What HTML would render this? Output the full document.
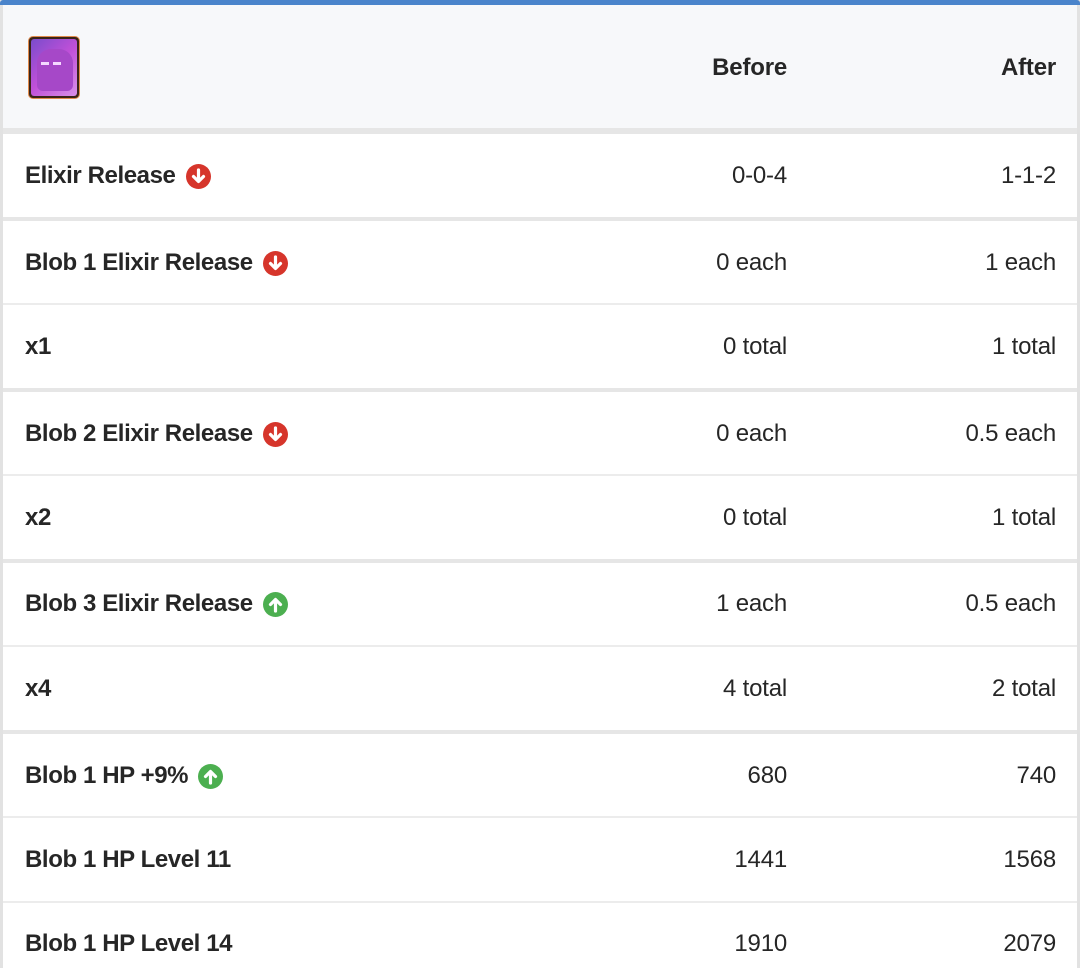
<!DOCTYPE html>
<html><head><meta charset="utf-8"><style>
html,body{margin:0;padding:0;width:1080px;height:968px;overflow:hidden;background:#fff;font-family:"Liberation Sans",sans-serif;color:#262626}
.a{position:absolute}
.t{position:absolute;left:25px;font-size:24px;font-weight:bold;line-height:30px;display:flex;align-items:center;white-space:nowrap;letter-spacing:-0.4px}
.v{position:absolute;font-size:24px;line-height:30px;text-align:right;white-space:nowrap;letter-spacing:-0.2px}
.b{right:293px}.c{right:24px}
.thick{position:absolute;left:3px;width:1074px;height:4px;background:#e6e6e6}
.thin{position:absolute;left:3px;width:1074px;height:2px;background:#ececec}
svg{margin-left:10px}
</style></head><body>
<div class="a" style="left:0;top:0;width:1080px;height:968px;border-left:3px solid #e2e2e2;border-right:3px solid #e2e2e2;box-sizing:border-box"></div>
<div class="a" style="left:0;top:0;width:1080px;height:5px;background:#4a84cb;border-radius:3px 3px 0 0"></div>
<div class="a" style="left:3px;top:5px;width:1074px;height:123px;background:#f7f8fa"></div>
<div class="a" style="left:28px;top:36px;width:52px;height:63px;border-radius:5px;background:#3a2418;border:1px solid #e08a4a;box-sizing:border-box;overflow:hidden">
<div style="position:absolute;left:2px;top:2px;right:2px;bottom:2px;border-radius:3px;background:linear-gradient(135deg,#7a4ccc,#c050d8 50%,#d890e8)"></div>
<div style="position:absolute;left:8px;top:12px;width:36px;height:42px;border-radius:14px 14px 6px 6px;background:#a648c8"></div>
<div style="position:absolute;left:12px;top:25px;width:8px;height:3px;background:#f4d8ff"></div>
<div style="position:absolute;left:24px;top:25px;width:8px;height:3px;background:#f4d8ff"></div>
</div>
<div class="v b" style="top:53px;font-weight:bold">Before</div>
<div class="v c" style="top:53px;font-weight:bold">After</div>
<div class="thick" style="top:128px;height:6px"></div>
<div class="thick" style="top:217px"></div>
<div class="thin" style="top:303px"></div>
<div class="thick" style="top:388px"></div>
<div class="thin" style="top:474px"></div>
<div class="thick" style="top:559px"></div>
<div class="thin" style="top:645px"></div>
<div class="thick" style="top:730px"></div>
<div class="thin" style="top:816px"></div>
<div class="thin" style="top:901px"></div>

<svg width="0" height="0" style="position:absolute"><defs>
<g id="dn"><circle cx="12.5" cy="12.5" r="12.5" fill="#d6352b"/><path d="M12.5 6v11M7.5 12.5l5 5 5-5" stroke="#fff" stroke-width="3.2" fill="none" stroke-linecap="round" stroke-linejoin="round"/></g>
<g id="up"><circle cx="12.5" cy="12.5" r="12.5" fill="#4caf50"/><path d="M12.5 19V8M7.5 12.5l5-5 5 5" stroke="#fff" stroke-width="3.2" fill="none" stroke-linecap="round" stroke-linejoin="round"/></g>
</defs></svg>

<div class="t" style="top:161px">Elixir Release<svg width="25" height="25"><use href="#dn"/></svg></div>
<div class="v b" style="top:161px">0-0-4</div><div class="v c" style="top:161px">1-1-2</div>

<div class="t" style="top:248px">Blob 1 Elixir Release<svg width="25" height="25"><use href="#dn"/></svg></div>
<div class="v b" style="top:248px">0 each</div><div class="v c" style="top:248px">1 each</div>

<div class="t" style="top:332px">x1</div>
<div class="v b" style="top:332px">0 total</div><div class="v c" style="top:332px">1 total</div>

<div class="t" style="top:419px">Blob 2 Elixir Release<svg width="25" height="25"><use href="#dn"/></svg></div>
<div class="v b" style="top:419px">0 each</div><div class="v c" style="top:419px">0.5 each</div>

<div class="t" style="top:503px">x2</div>
<div class="v b" style="top:503px">0 total</div><div class="v c" style="top:503px">1 total</div>

<div class="t" style="top:589px">Blob 3 Elixir Release<svg width="25" height="25"><use href="#up"/></svg></div>
<div class="v b" style="top:589px">1 each</div><div class="v c" style="top:589px">0.5 each</div>

<div class="t" style="top:674px">x4</div>
<div class="v b" style="top:674px">4 total</div><div class="v c" style="top:674px">2 total</div>

<div class="t" style="top:761px">Blob 1 HP +9%<svg width="25" height="25"><use href="#up"/></svg></div>
<div class="v b" style="top:761px">680</div><div class="v c" style="top:761px">740</div>

<div class="t" style="top:845px">Blob 1 HP Level 11</div>
<div class="v b" style="top:845px">1441</div><div class="v c" style="top:845px">1568</div>

<div class="t" style="top:929px">Blob 1 HP Level 14</div>
<div class="v b" style="top:929px">1910</div><div class="v c" style="top:929px">2079</div>
</body></html>
